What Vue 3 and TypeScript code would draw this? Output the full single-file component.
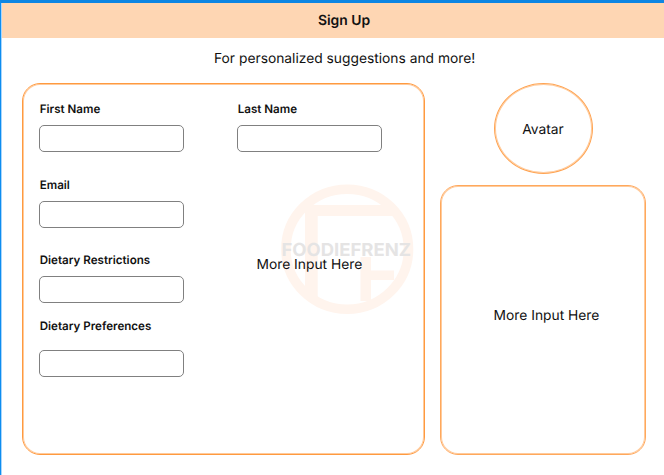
<script setup lang="ts">
import { reactive } from 'vue'

interface Field {
  id: string
  label: string
}

const rows: Field[][] = [
  [
    { id: 'first', label: 'First Name' },
    { id: 'last', label: 'Last Name' },
  ],
  [{ id: 'email', label: 'Email' }],
  [{ id: 'restrictions', label: 'Dietary Restrictions' }],
  [{ id: 'preferences', label: 'Dietary Preferences' }],
]

const values = reactive<Record<string, string>>({})
</script>

<template>
  <div class="page">
    <header class="bar"><h1>Sign Up</h1></header>
    <p class="lead">For personalized suggestions and more!</p>
    <main class="content">
      <form class="panel form" @submit.prevent>
        <svg class="mark" viewBox="0 0 134 132" aria-hidden="true">
          <ellipse cx="67.2" cy="66.2" rx="61.3" ry="60" fill="none" stroke="#fff4ed" stroke-width="9.6" />
          <path fill="#fff4ed" d="M25 22H105L114 33H37.7V118L25 112ZM80.5 74H91V87.5H114V97H91V118H80.5Z" />
          <text x="1.5" y="73" textLength="129.5" lengthAdjust="spacingAndGlyphs">FOODIEFRENZ</text>
        </svg>
        <div v-for="row in rows" :key="row[0].id" class="row" :class="row[0].id">
          <label v-for="field in row" :key="field.id" class="field">
            <span>{{ field.label }}</span>
            <input v-model="values[field.id]" type="text" />
          </label>
        </div>
        <span class="more">More Input Here</span>
      </form>
      <aside class="side">
        <div class="avatar">Avatar</div>
        <div class="panel extra">More Input Here</div>
      </aside>
    </main>
  </div>
</template>

<style>
body {
  margin: 0;
  background: #fff;
}
</style>

<style scoped>
.page {
  box-sizing: border-box;
  width: 664px;
  height: 475px;
  overflow: hidden;
  border-top: 3px solid #0d86e3;
  border-left: 1px solid #0d8df0;
  box-shadow: inset 1px 0 #a9d6fb;
  font-family: Inter, sans-serif;
  font-size: 13.8px;
  text-rendering: geometricPrecision;
  color: #111;
}
.bar {
  height: 35px;
  margin-left: 1px;
  display: flex;
  align-items: center;
  justify-content: center;
  background: #fed6b3;
}
h1 {
  margin: 1px 0 0 22px;
  font-size: 13.9px;
  line-height: 18px;
  font-weight: 600;
}
.lead {
  margin: 12px 0 0 213px;
  line-height: 18px;
  white-space: nowrap;
}
.content {
  display: flex;
  gap: 15px;
  padding: 15px 0 0 21px;
}
.panel {
  box-sizing: border-box;
  border: 1px solid #ff9a40;
  box-shadow: inset 0 0 0 1px #ffcb9c;
  border-radius: 18px;
}
.form {
  position: relative;
  width: 403px;
  height: 372px;
  padding: 17px 0 0 16px;
}
.row {
  position: relative;
  display: flex;
  gap: 53px;
  height: 75.5px;
}
.row.restrictions {
  height: 66px;
}
.field {
  display: flex;
  flex-direction: column;
  gap: 7px;
}
.preferences .field {
  gap: 15px;
}
.field span {
  padding-left: 0.7px;
  height: 17px;
  font-size: 11.6px;
  line-height: 17px;
  font-weight: 600;
}
input {
  box-sizing: border-box;
  width: 145px;
  height: 27px;
  padding: 0 8px;
  border: 1px solid #808080;
  border-radius: 5px;
  outline: none;
  background: #fff;
  font: inherit;
}
.mark {
  position: absolute;
  left: 257px;
  top: 99px;
  width: 134px;
  height: 132px;
}
.mark text {
  font-size: 18px;
  font-weight: 700;
  fill: #e5e4e4;
}
.more {
  position: absolute;
  left: 233.5px;
  top: 172px;
  line-height: 18px;
  white-space: nowrap;
}
.side {
  display: flex;
  flex-direction: column;
  align-items: center;
  gap: 11px;
}
.avatar {
  box-sizing: border-box;
  width: 99px;
  height: 91px;
  padding-top: 2px;
  display: grid;
  place-items: center;
  border: 1px solid #ffa351;
  box-shadow: inset 0 0 0 1px #ffcb9c;
  border-radius: 50%;
}
.extra {
  width: 206px;
  height: 270px;
  padding-top: 121px;
  line-height: 18px;
  padding-left: 7px;
  text-align: center;
  border-color: #ffa85c;
}
</style>
